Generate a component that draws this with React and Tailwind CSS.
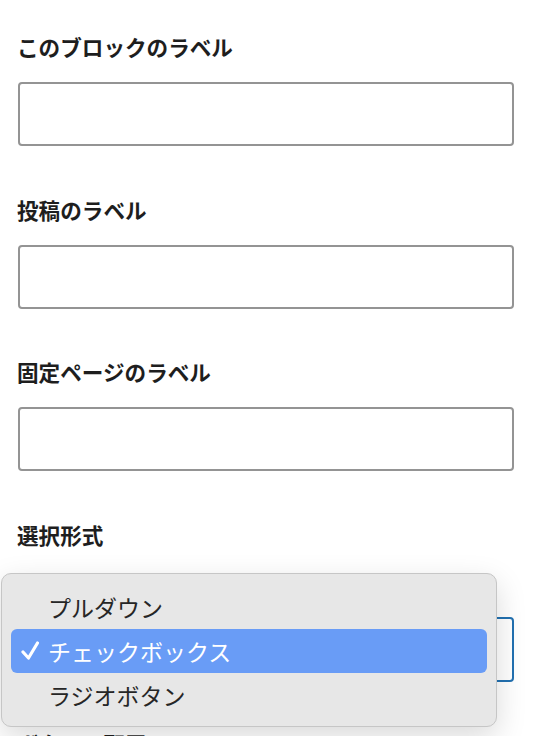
import React from "react";

const font = { fontFamily: '"Noto Sans CJK JP", "Noto Sans", sans-serif' };

function Field({ label }) {
  return (
    <div className="flex flex-col">
      <div className="text-[21.6px] leading-[25px] font-bold text-[#1e1e1e] -ml-px">{label}</div>
      <div className="mt-[23px] h-[64px] rounded-[4px] border-2 border-[#949494] bg-white" />
    </div>
  );
}

export default function App() {
  return (
    <div className="relative h-[736px] w-[538px] overflow-hidden bg-white" style={font}>
      <div className="ml-[18px] w-[496px] pt-[34px] flex flex-col gap-[50.5px]">
        <Field label="このブロックのラベル" />
        <Field label="投稿のラベル" />
        <Field label="固定ページのラベル" />
        <div className="flex flex-col">
          <div className="text-[21.6px] leading-[25px] font-bold text-[#1e1e1e] -ml-px">選択形式</div>
          <div className="mt-[70px] h-[65px] rounded-[4px] border-2 border-[#2271b1] bg-white" />
          <div className="mt-[49px] text-[21.6px] leading-[25px] font-bold text-[#1e1e1e] -ml-px">ボタンの配置</div>
        </div>
      </div>

      <div className="absolute left-[1px] top-[573px] w-[496px] h-[154px] rounded-[10px] border border-[#c6c6c6] bg-[#e7e7e7] shadow-[0_10px_30px_rgba(0,0,0,0.15)] px-[9px] pt-[11px] flex flex-col">
        <div className="h-[44px] flex items-center pl-[37px] text-[23px] text-[#262626]">プルダウン</div>
        <div className="h-[44px] flex items-center rounded-[6px] bg-[#699cf6] text-white text-[23px] relative pl-[37px]">
          <svg className="absolute left-[10px] top-[12px]" width="18" height="19" viewBox="0 0 18 19" fill="none">
            <path d="M2 11 L7.5 17 L16.5 2" stroke="white" strokeWidth="3.2" strokeLinecap="round" strokeLinejoin="round" />
          </svg>
          チェックボックス
        </div>
        <div className="h-[44px] flex items-center pl-[37px] text-[23px] text-[#262626]">ラジオボタン</div>
      </div>
    </div>
  );
}
